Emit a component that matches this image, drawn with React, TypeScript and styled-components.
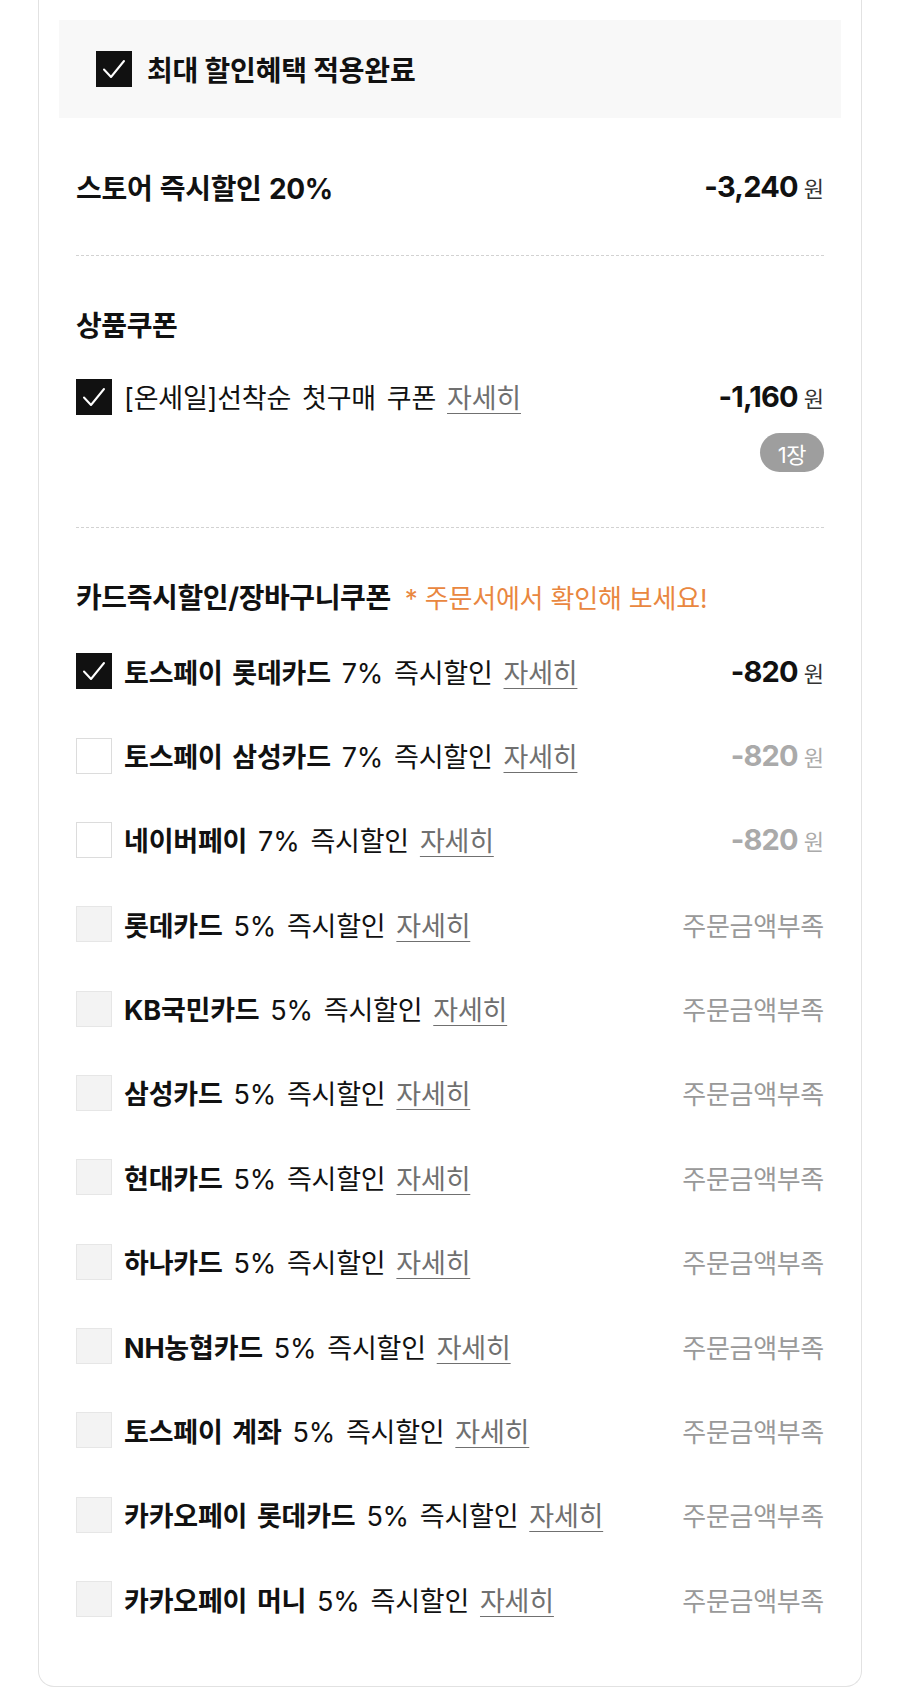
import React from 'react';
import styled, { createGlobalStyle } from 'styled-components';

const GlobalStyle = createGlobalStyle`
    body {
        margin: 0;
        background: #ffffff;
        font-family: "Inter", "Noto Sans CJK KR", "Noto Sans", sans-serif;
        color: #111111;
    }
`

type BoxState = 'checked' | 'unchecked' | 'disabled';

const Card = styled.div`
    margin: 0 38px 21px 38px;
    padding: 20px 20px 45px;
    border: 1px solid #e2e2e2;
    border-top: none;
    border-radius: 0 0 16px 16px;
`

const AppliedBox = styled.div`
    height: 98px;
    display: flex;
    align-items: center;
    gap: 15px;
    padding-left: 37px;
    background-color: #f8f8f8;
    font-size: 28px;
    font-weight: 700;
    letter-spacing: -0.2px;
`

const Body = styled.div`
    padding: 0 17px;
`

const StoreRow = styled.div`
    height: 137px;
    display: flex;
    align-items: center;
    justify-content: space-between;
    font-size: 28px;
    font-weight: 700;
    letter-spacing: -0.3px;
    word-spacing: 1px;
`

const Divider = styled.hr`
    margin: 0;
    border: none;
    border-top: 1px dashed #d2d2d2;
`

const Section = styled.section<{ $bottom: number }>`
    padding: 50px 0 ${p => p.$bottom}px;
`

const SectionTitle = styled.div`
    display: flex;
    align-items: center;
    gap: 14px;
    height: 36px;
    font-size: 28px;
    font-weight: 700;
    letter-spacing: -0.4px;

    .note {
        font-size: 26px;
        font-weight: 400;
        letter-spacing: -0.2px;
        color: #e9873f;
    }
`

const Row = styled.div<{ $height: number }>`
    height: ${p => p.$height}px;
    display: flex;
    align-items: center;
    justify-content: space-between;
`

const Label = styled.div`
    display: flex;
    align-items: center;
    gap: 12px;
    font-size: 27px;
    letter-spacing: -0.2px;
    word-spacing: 3.5px;
    white-space: nowrap;

    b {
        font-weight: 700;
    }

    u {
        color: #707070;
        text-underline-offset: 5px;
        text-decoration-thickness: 1px;
    }
`

const Box = styled.span<{ $state: BoxState }>`
    box-sizing: border-box;
    flex: none;
    width: 36px;
    height: 36px;
    display: flex;
    align-items: center;
    justify-content: center;
    background-color: ${p => p.$state === 'checked' ? '#111111' : p.$state === 'disabled' ? '#f3f3f3' : '#ffffff'};
    border: 1px solid ${p => p.$state === 'checked' ? '#111111' : p.$state === 'disabled' ? '#e6e6e6' : '#dcdcdc'};
`

const Amount = styled.div<{ $muted?: boolean }>`
    display: flex;
    align-items: baseline;
    gap: 6px;
    font-size: 29px;
    font-weight: 700;
    letter-spacing: -0.8px;
    color: ${p => p.$muted ? '#aaaaaa' : '#111111'};

    span {
        font-size: 22px;
        font-weight: 400;
        letter-spacing: 0;
        color: ${p => p.$muted ? '#aaaaaa' : '#333333'};
    }
`

const Shortage = styled.span`
    font-size: 26px;
    letter-spacing: -0.3px;
    color: #999999;
`

const PillRow = styled.div`
    display: flex;
    justify-content: flex-end;
    margin-top: 18px;
`

const Pill = styled.span`
    height: 39px;
    padding: 0 18px;
    display: flex;
    align-items: center;
    border-radius: 20px;
    background-color: #9e9e9e;
    color: #ffffff;
    font-size: 22px;
    letter-spacing: -0.5px;
`

const CardList = styled.div`
    margin-top: 15px;
`

const CheckBox: React.FC<{ state: BoxState }> = ({ state }) => (
    <Box $state={state}>
        {state === 'checked' &&
            <svg width="30" height="30" viewBox="0 0 30 30" fill="none">
                <polyline points="5,15.5 12,23 25,7" stroke="#ffffff" strokeWidth="2" strokeLinecap="round" strokeLinejoin="round" />
            </svg>}
    </Box>
)

const Won: React.FC<{ value: string, muted?: boolean }> = ({ value, muted }) => (
    <Amount $muted={muted}>{value}<span>원</span></Amount>
)

interface CardDiscount {
    name: string,
    rate: string,
    state: BoxState,
}

const cards: CardDiscount[] = [
    { name: '토스페이 롯데카드', rate: '7%', state: 'checked' },
    { name: '토스페이 삼성카드', rate: '7%', state: 'unchecked' },
    { name: '네이버페이', rate: '7%', state: 'unchecked' },
    { name: '롯데카드', rate: '5%', state: 'disabled' },
    { name: 'KB국민카드', rate: '5%', state: 'disabled' },
    { name: '삼성카드', rate: '5%', state: 'disabled' },
    { name: '현대카드', rate: '5%', state: 'disabled' },
    { name: '하나카드', rate: '5%', state: 'disabled' },
    { name: 'NH농협카드', rate: '5%', state: 'disabled' },
    { name: '토스페이 계좌', rate: '5%', state: 'disabled' },
    { name: '카카오페이 롯데카드', rate: '5%', state: 'disabled' },
    { name: '카카오페이 머니', rate: '5%', state: 'disabled' },
]

const App: React.FC = () => {
    return (
        <>
            <GlobalStyle />
            <Card>
                <AppliedBox>
                    <CheckBox state='checked' />
                    <span>최대 할인혜택 적용완료</span>
                </AppliedBox>
                <Body>
                    <StoreRow>
                        <span>스토어 즉시할인 20%</span>
                        <Won value='-3,240' />
                    </StoreRow>
                    <Divider />
                    <Section $bottom={55}>
                        <SectionTitle>상품쿠폰</SectionTitle>
                        <Row $height={37} style={{ marginTop: 36 }}>
                            <Label>
                                <CheckBox state='checked' />
                                <span>[온세일]선착순 첫구매 쿠폰 <u>자세히</u></span>
                            </Label>
                            <Won value='-1,160' />
                        </Row>
                        <PillRow><Pill>1장</Pill></PillRow>
                    </Section>
                    <Divider />
                    <Section $bottom={0}>
                        <SectionTitle>
                            카드즉시할인/장바구니쿠폰
                            <span className='note'>* 주문서에서 확인해 보세요!</span>
                        </SectionTitle>
                        <CardList>
                            {cards.map((card, i) => (
                                <Row $height={84.36} key={i}>
                                    <Label>
                                        <CheckBox state={card.state} />
                                        <span><b>{card.name}</b> {card.rate} 즉시할인 <u>자세히</u></span>
                                    </Label>
                                    {card.state === 'disabled'
                                        ? <Shortage>주문금액부족</Shortage>
                                        : <Won value='-820' muted={card.state === 'unchecked'} />}
                                </Row>
                            ))}
                        </CardList>
                    </Section>
                </Body>
            </Card>
        </>
    )
}

export default App;
